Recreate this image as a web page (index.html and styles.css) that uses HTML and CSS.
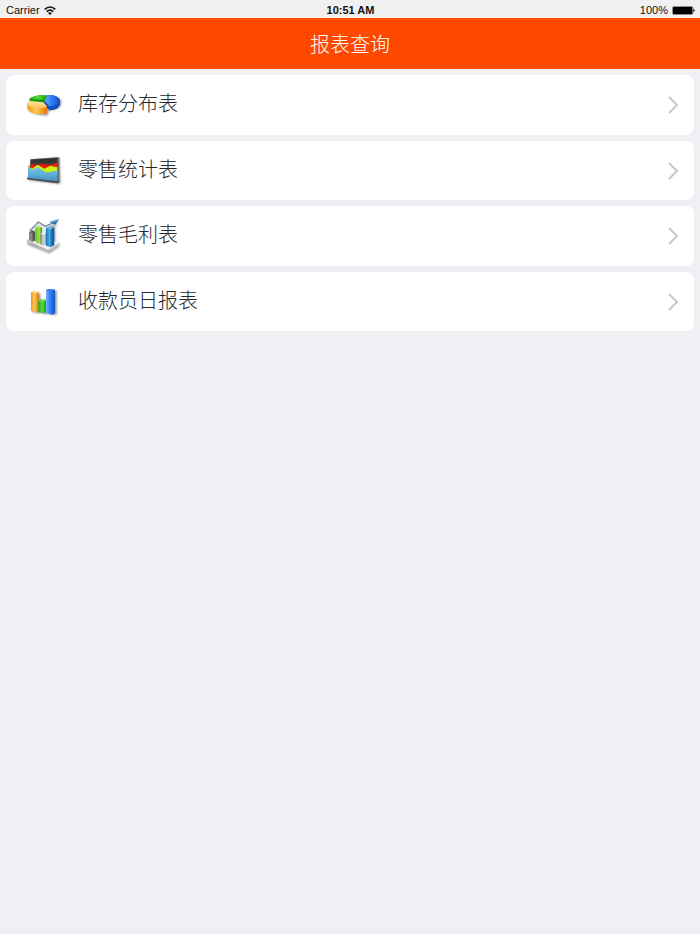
FILE: index.html
```html
<!DOCTYPE html>
<html lang="zh-CN">
<head>
<meta charset="utf-8">
<meta name="viewport" content="width=device-width, initial-scale=1">
<title>报表查询</title>
<link rel="stylesheet" href="styles.css">
</head>
<body>
<div class="status">
  <div class="status-left">
    <span>Carrier</span>
    <svg class="wifi" viewBox="0 0 36 27" aria-hidden="true">
      <path d="M2 10 Q18 -4 34 10" fill="none" stroke="#111" stroke-width="5"/>
      <path d="M8 17 Q18 8 28 17" fill="none" stroke="#111" stroke-width="5"/>
      <path d="M12 21 Q18 16 24 21 L18 27Z" fill="#111"/>
    </svg>
  </div>
  <time class="clock">10:51 AM</time>
  <div class="status-right">
    <span>100%</span>
    <svg class="battery" viewBox="0 0 69 27" aria-hidden="true">
      <rect x="1.500" y="1.500" width="61" height="24" rx="4" fill="#fff" stroke="#555" stroke-width="2"/>
      <rect x="3" y="3" width="58" height="21" rx="2" fill="#000"/>
      <path d="M64 9 Q68 10 68 13.500 T64 18Z" fill="#111"/>
    </svg>
  </div>
</div>
<header class="navbar"><h1>报表查询</h1></header>
<main>
  <nav class="reports">
    <a class="report" href="#stock">
      <svg class="icon" viewBox="0 -3 150 132" aria-hidden="true">
        <defs>
          <filter id="soft" x="-20%" y="-20%" width="150%" height="150%"><feGaussianBlur stdDeviation="2.500"/></filter>
          <linearGradient id="orange" x2="1" y2="0"><stop offset="0" stop-color="#f09a20"/><stop offset=".45" stop-color="#ffc65a"/><stop offset="1" stop-color="#e27a08"/></linearGradient>
          <linearGradient id="cream" x2="0" y2="1"><stop offset="0" stop-color="#ffe5a0"/><stop offset="1" stop-color="#ffc45c"/></linearGradient>
          <linearGradient id="blue" x2="1" y2="0"><stop offset="0" stop-color="#6fb2ff"/><stop offset=".5" stop-color="#2c7cf0"/><stop offset="1" stop-color="#1450c4"/></linearGradient>
          <linearGradient id="green" x2="1" y2="0"><stop offset="0" stop-color="#1cab1c"/><stop offset=".5" stop-color="#58dc30"/><stop offset="1" stop-color="#18a018"/></linearGradient>
        </defs>
        <path d="M25 58 V78 Q45 96 84 94 L86 80 Q118 78 124 60 V48 L80 45Z" fill="#555" opacity=".6" filter="url(#soft)"/>
        <path d="M74 36 Q91 30 108 37 Q121 43 120 53 V62 Q116 77 89 79 L72 62Z" fill="#1250c4"/>
        <path d="M74 36 Q91 30 108 37 Q119 42 120 50 Q119 63 88 67 L71 47Z" fill="url(#blue)"/>
        <path d="M28 46 Q38 35 65 34 L81 35 L71 56 L30 53Z" fill="#0c920c"/>
        <path d="M28 46 Q38 35 65 34 L81 35 L71 47Z" fill="url(#green)"/>
        <path d="M22 58 V71 Q27 90 60 91 Q76 91 81 87 V66Z" fill="url(#orange)"/>
        <path d="M27 50 L70 55 L81 67 Q66 76 45 71 Q19 65 22 56 Q23 52 27 50Z" fill="url(#cream)"/>
      </svg>
      <span class="label">库存分布表</span>
      <svg class="chevron" viewBox="0 0 10 18" aria-hidden="true"><path d="M1 1 L9 9 L1 17"/></svg>
    </a>
    <a class="report" href="#retail">
      <svg class="icon" viewBox="0 -3 150 132" aria-hidden="true">
        <defs>
          <linearGradient id="water" x2="0" y2="1"><stop offset="0" stop-color="#7cc8e8"/><stop offset="1" stop-color="#3f93c4"/></linearGradient>
          <linearGradient id="panel" x2="0" y2="1"><stop offset="0" stop-color="#292929"/><stop offset="1" stop-color="#4a4545"/></linearGradient>
        </defs>
        <path d="M34 30 L118 24 L121 101 L25 90Z" fill="#333" opacity=".65" filter="url(#soft)"/>
        <path d="M31 28 L113 22 L118 23 L117 97 L112 99 L21 87 L24 79 L24 49 L31 48Z" fill="#6a6a6c"/>
        <path d="M32 29 L112 24 V48 L31 52Z" fill="url(#panel)"/>
        <path d="M31 47 L37 42 L52 46 L67 41 L89 45 L112 38 V62 L31 62Z" fill="#ef160f"/>
        <path d="M25 49 L36 56 L53 44 L73 56 L91 47 L112 52 V70 L25 66Z" fill="#c8f510"/>
        <path d="M24 50 L37 59 L53 51 L80 68 L112 61 V94 L24 84Z" fill="url(#water)"/>
        <path d="M21 84 L113 94 L118 91 L117 97 L112 100 L21 88Z" fill="#4c4d50"/>
      </svg>
      <span class="label">零售统计表</span>
      <svg class="chevron" viewBox="0 0 10 18" aria-hidden="true"><path d="M1 1 L9 9 L1 17"/></svg>
    </a>
    <a class="report" href="#profit">
      <svg class="icon" viewBox="0 0 150 132" aria-hidden="true">
        <defs>
          <linearGradient id="silver" x2="1" y2="0"><stop offset="0" stop-color="#888"/><stop offset=".6" stop-color="#ddd"/><stop offset="1" stop-color="#777"/></linearGradient>
          <linearGradient id="lime" x2="1" y2="0"><stop offset="0" stop-color="#68bd22"/><stop offset=".6" stop-color="#9be447"/><stop offset="1" stop-color="#438e18"/></linearGradient>
          <linearGradient id="azure" x2="1" y2="0"><stop offset="0" stop-color="#1676b9"/><stop offset=".45" stop-color="#52aee8"/><stop offset=".6" stop-color="#187dc5"/><stop offset="1" stop-color="#085690"/></linearGradient>
        </defs>
        <path d="M24 84 L86 112 L120 91 L116 98 L88 117 L23 91Z" fill="#333" opacity=".7" filter="url(#soft)"/>
        <path d="M34 52 L58 28 L80 40 L114 22 L106 40 L108 92 L95 100Z" fill="#555" opacity=".45" filter="url(#soft)"/>
        <path d="M21 78 L42 68 L120 86 L118 92 L85 112 L21 85Z" fill="#bbb"/>
        <path d="M21 77 L44 67 L119 86 L84 107Z" fill="#f4f4f4"/>
        <path d="M31 53 L55 27 L78 40 V88 L31 78Z" fill="#e4e7ea"/>
        <path d="M28 54 L37 49 L46 53 V79 L38 83 L28 78Z" fill="#555"/>
        <path d="M28 54 L38 58 V83 L28 78Z" fill="#888"/>
        <path d="M46 41 L55 36 L66 40 V85 L56 89 L46 84Z" fill="url(#lime)"/>
        <path d="M46 41 L55 36 L66 40 L56 44Z" fill="#a7e65a"/>
        <path d="M61 59 L71 54 L80 58 V91 L72 95 L61 91Z" fill="url(#silver)"/>
        <path d="M61 59 L71 54 L80 58 L71 62Z" fill="#eee"/>
        <path d="M78 43 L89 37 L103 40 V94 L91 100 L78 95Z" fill="url(#azure)"/>
        <path d="M78 43 L89 37 L103 40 L91 46Z" fill="#73b8e0"/>
        <path d="M29 51 L55 24 L76 37 L104 24" fill="none" stroke="#71899a" stroke-width="4"/>
        <path d="M89 23 L117 16 L106 32 L98 29Z" fill="#2378b5"/>
        <path d="M91 23 L117 16 L99 26Z" fill="#78a8c8"/>
      </svg>
      <span class="label">零售毛利表</span>
      <svg class="chevron" viewBox="0 0 10 18" aria-hidden="true"><path d="M1 1 L9 9 L1 17"/></svg>
    </a>
    <a class="report" href="#cashier">
      <svg class="icon" viewBox="0 0 150 132" aria-hidden="true">
        <path d="M38 39 L61 41 V66 L83 60 V32 L110 32 V105 L38 97Z" fill="#444" opacity=".6" filter="url(#soft)"/>
        <path d="M33 37 L39 34 L56 36 V92 L50 96 L33 93Z" fill="url(#orange)"/>
        <path d="M33 37 L39 34 L56 36 L50 40Z" fill="#ffe09a"/>
        <path d="M55 63 L61 58 L78 60 V96 L72 100 L55 96Z" fill="url(#green)"/>
        <path d="M55 63 L61 58 L78 60 L72 65Z" fill="#75db4c"/>
        <path d="M78 31 L84 27 L105 29 V99 L98 104 L78 99Z" fill="url(#blue)"/>
        <path d="M78 31 L84 27 L105 29 L98 34Z" fill="#3c79e8"/>
      </svg>
      <span class="label">收款员日报表</span>
      <svg class="chevron" viewBox="0 0 10 18" aria-hidden="true"><path d="M1 1 L9 9 L1 17"/></svg>
    </a>
  </nav>
</main>
</body>
</html>
```
FILE: styles.css
```css
* {
  box-sizing: border-box;
}

body {
  margin: 0;
  min-height: 100vh;
  background: #efeff4;
  color: #24282c;
  font-family: "Liberation Sans", "Noto Sans CJK SC", sans-serif;
}

.status {
  display: grid;
  grid-template-columns: 1fr auto 1fr;
  align-items: center;
  height: 18px;
  padding: 2px 5px 0 6px;
  background: #f0f0f0;
  color: #111;
  font-size: 11px;
  line-height: 16px;
}

.status-left,
.status-right {
  display: flex;
  align-items: center;
  gap: 4px;
}

.status-right {
  justify-content: flex-end;
}

.clock {
  font-weight: 700;
}

.wifi {
  width: 12px;
  height: 9px;
}

.battery {
  width: 23px;
  height: 9px;
}

.navbar {
  display: flex;
  align-items: center;
  justify-content: center;
  height: 51px;
  background: #ff4800;
}

.navbar h1 {
  margin: 0;
  color: #fff;
  font-family: "Noto Sans CJK SC", sans-serif;
  font-size: 20px;
  font-weight: 300;
  line-height: 30px;
}

.reports {
  display: grid;
  grid-auto-rows: 60px 59px;
  gap: 6px;
  padding: 6px;
}

.report {
  display: flex;
  align-items: center;
  padding: 0 16px 0 14px;
  border-radius: 8px;
  background: #fff;
  color: inherit;
  text-decoration: none;
}

.icon {
  flex: none;
  width: 50px;
  height: 44px;
}

.label {
  flex: 1;
  padding: 0 8px 4px;
  font-family: "Noto Sans CJK SC", sans-serif;
  font-size: 20px;
  font-weight: 300;
  line-height: 30px;
}

.chevron {
  flex: none;
  width: 10px;
  height: 18px;
  overflow: visible;
  fill: none;
  stroke: #c7c7cc;
  stroke-width: 2;
}
```
